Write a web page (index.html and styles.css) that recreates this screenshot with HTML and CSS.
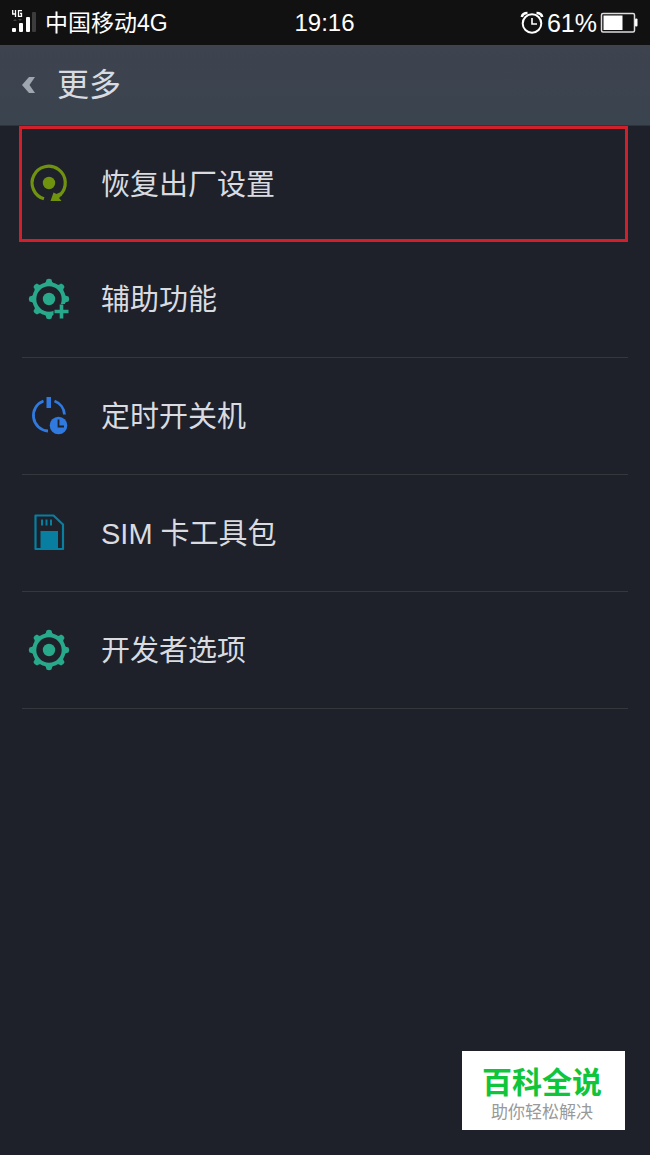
FILE: index.html
```html
<!DOCTYPE html>
<html lang="zh-CN">
<head>
  <meta charset="UTF-8">
  <meta name="viewport" content="width=device-width, initial-scale=1.0">
  <title>更多</title>
  <link rel="stylesheet" href="styles.css">
</head>
<body>
  <div class="status-bar">
    <div class="status-left">
      <svg class="signal" width="26" height="26" viewBox="0 0 26 26">
        <path d="M1.700 0v4h3.500M4.500 0v7M11 .6H7.500v5.800h3V3.500H9" fill="none" stroke="#fff" stroke-width="1.300"/>
        <path d="M2 11l2-2 2 2zM7 9h4l-2 2z" fill="#444"/>
        <rect x="1" y="18" width="4" height="4" rx="1" fill="#fff"/>
        <rect x="8" y="13" width="4" height="9" rx="1" fill="#fff"/>
        <rect x="15" y="7" width="4" height="15" rx="1" fill="#fff"/>
        <rect x="21" y="2" width="4" height="20" rx="1" fill="#3c3c3c"/>
      </svg>
      <span class="carrier">中国移动4G</span>
    </div>
    <span class="time">19:16</span>
    <div class="status-right">
      <svg class="alarm" width="24" height="24" viewBox="0 0 24 24" fill="none" stroke="#fff">
        <circle cx="12" cy="12.500" r="9.300" stroke-width="2"/>
        <path d="M12 7v6h5" stroke-width="1.600"/>
        <path d="M1.800 6C2.300 3.500 4.500 2 7.500 2M22.200 6c-.5-2.500-2.700-4-5.700-4" stroke-width="2.600"/>
      </svg>
      <span class="percent">61%</span>
      <svg class="battery" width="38" height="22" viewBox="0 0 38 22">
        <rect x="1.500" y="1.500" width="33" height="18.500" rx="1.500" fill="none" stroke="#ddd" stroke-width="1.500"/>
        <rect x="3.500" y="3.500" width="19" height="14.500" fill="#fff"/>
        <rect x="35" y="6.500" width="2.500" height="8" rx="1" fill="#fff"/>
      </svg>
    </div>
  </div>

  <header class="title-bar">
    <button class="back" aria-label="返回">
      <svg width="16" height="20" viewBox="0 0 16 20"><path d="M8 2h6L8.500 10l5.500 8H8L1 10z" fill="#a0a6af"/></svg>
    </button>
    <h1>更多</h1>
  </header>

  <main class="menu">
    <a href="#" class="item highlight">
      <svg class="icon" width="42" height="42" viewBox="0 0 42 42">
        <path d="M16 35.800A16.600 16.600 0 1 1 32 32" fill="none" stroke="#6f930f" stroke-width="3.200"/>
        <circle cx="21" cy="20" r="6.200" fill="#6f930f"/>
        <path d="M25.500 29.500l3 1.500 3-1.500 2.500 2.500-3 3 2.500 3H22.500z" fill="#6f930f"/>
      </svg>
      <span class="label">恢复出厂设置</span>
    </a>
    <a href="#" class="item">
      <svg class="icon" width="42" height="42" viewBox="0 0 42 42">
        <g fill="#28a98b">
          <g id="gear-teeth">
            <path id="teeth" d="M14.500 7l2-1.500q1.500-.5 2-4q2.500-1.500 5 0q.5 3.500 2 4l2 1.500zM14.500 35l2 1.500q1.500.5 2 4q2.500 1.500 5 0q.5-3.500 2-4l2-1.500z"/>
            <use href="#teeth" transform="rotate(45 21 21)"/>
            <use href="#teeth" transform="rotate(90 21 21)"/>
            <use href="#teeth" transform="rotate(135 21 21)"/>
          </g>
          <circle cx="21" cy="21" r="6.200"/>
        </g>
        <circle cx="21" cy="21" r="14.700" fill="none" stroke="#28a98b" stroke-width="4"/>
        <path d="M25.500 42V31l5-5H42v16z" fill="#1e2129"/>
        <path d="M33.500 26.500v14M26.500 33.500h14" stroke="#28a98b" stroke-width="3.600"/>
      </svg>
      <span class="label">辅助功能</span>
    </a>
    <a href="#" class="item">
      <svg class="icon" width="42" height="42" viewBox="0 0 42 42">
        <path d="M15.500 6A15.500 15.500 0 0 0 20 36M26.500 6A15.500 15.500 0 0 1 36.500 19.500" fill="none" stroke="#2f79df" stroke-width="2.800"/>
        <rect x="18.500" y="2" width="4.500" height="11" fill="#2f79df"/>
        <circle cx="30.500" cy="30.500" r="8.800" fill="#2f79df"/>
        <path d="M30.500 24.500v7h5.500" fill="none" stroke="#1e2129" stroke-width="1.800"/>
      </svg>
      <span class="label">定时开关机</span>
    </a>
    <a href="#" class="item">
      <svg class="icon" width="42" height="42" viewBox="0 0 42 42">
        <path d="M7.500 3.500h18l9.500 9v24.500H7.500z" fill="none" stroke="#087fa0" stroke-width="2.200" stroke-linejoin="round"/>
        <path d="M14 7.500v6M18.500 7.500v6M23 7.500v6" stroke="#087fa0" stroke-width="2"/>
        <rect x="12.500" y="19" width="17.500" height="18" fill="#087fa0"/>
      </svg>
      <span class="label">SIM 卡工具包</span>
    </a>
    <a href="#" class="item">
      <svg class="icon" width="42" height="42" viewBox="0 0 42 42">
        <g fill="#28a98b">
          <use href="#gear-teeth"/>
          <circle cx="21" cy="21" r="6.200"/>
        </g>
        <circle cx="21" cy="21" r="14.700" fill="none" stroke="#28a98b" stroke-width="4"/>
      </svg>
      <span class="label">开发者选项</span>
    </a>
  </main>

  <div class="watermark">
    <strong>百科全说</strong>
    <span>助你轻松解决</span>
  </div>
</body>
</html>
```
FILE: styles.css
```css
body {
  font-family: "Liberation Sans", "Noto Sans CJK SC", sans-serif;
  margin: 0;
  min-height: 100vh;
  background-color: #1e2129;
  color: #d9dbe0;
}
svg {
  display: block;
  flex: none;
}
.status-bar {
  display: grid;
  grid-template-columns: 1fr auto 1fr;
  align-items: center;
  height: 45px;
  padding: 0 12px 0 11px;
  background-color: #111;
  color: #fff;
  font-size: 24px;
  line-height: 28px;
}
.status-left,
.status-right {
  display: flex;
  align-items: center;
}
.status-left {
  gap: 8px;
}
.status-right {
  justify-content: flex-end;
  gap: 3px;
}
.carrier {
  font-size: 23px;
}
.percent {
  font-size: 25px;
}
.title-bar {
  display: flex;
  align-items: center;
  gap: 20px;
  box-sizing: border-box;
  height: 81px;
  padding: 0 21px;
  background: linear-gradient(#3e434e, #3a444e);
  border-bottom: 1px solid #2e343d;
}
.back {
  padding: 0;
  border: none;
  background: none;
  cursor: pointer;
}
h1 {
  margin: 0;
  font-size: 32px;
  line-height: 40px;
  font-weight: normal;
}
.menu {
  margin: 0 22px;
}
.item {
  display: flex;
  align-items: center;
  gap: 31px;
  box-sizing: border-box;
  height: 117px;
  padding: 0 6px;
  border-bottom: 1px solid #34373c;
  color: inherit;
  font-size: 29px;
  line-height: 40px;
  text-decoration: none;
}
.item.highlight {
  height: 116px;
  margin: 0 0 -1px -3px;
  border: 3px solid #cf202b;
}
.label {
  padding-top: 2px;
}
.watermark {
  position: fixed;
  right: 25px;
  bottom: 25px;
  display: flex;
  flex-direction: column;
  align-items: center;
  padding: 13px 23px 7px 20px;
  background-color: #fff;
}
.watermark strong {
  color: #0fc53a;
  font-size: 30px;
  line-height: 38px;
  font-weight: bold;
}
.watermark span {
  color: #999;
  font-size: 17px;
  line-height: 21px;
}
```
